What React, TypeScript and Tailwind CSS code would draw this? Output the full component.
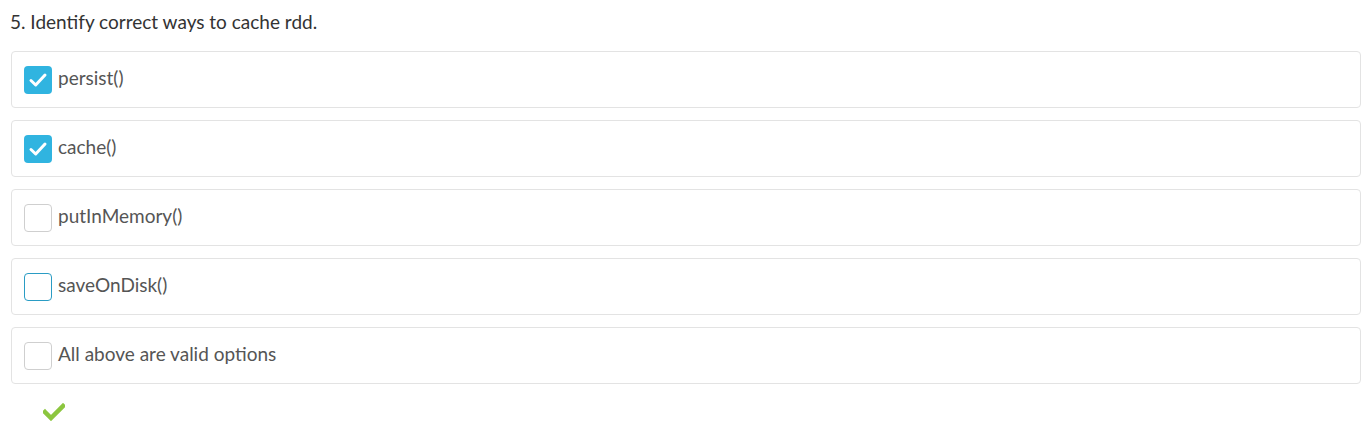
import React from "react";

const options = [
  { label: "persist()", state: "checked" },
  { label: "cache()", state: "checked" },
  { label: "putInMemory()", state: "empty" },
  { label: "saveOnDisk()", state: "focus" },
  { label: "All above are valid options", state: "empty" },
];

function Box({ state }: { state: string }) {
  if (state === "checked") {
    return (
      <div className="w-[28px] h-[28px] rounded-[4px] bg-[#30b4e0] flex items-center justify-center shrink-0">
        <svg width="22" height="22" viewBox="0 0 22 22" fill="none">
          <path d="M4 11.5 L8.7 16 L18 6" stroke="white" strokeWidth="3" strokeLinecap="round" strokeLinejoin="round" />
        </svg>
      </div>
    );
  }
  return (
    <div
      className={
        "w-[28px] h-[28px] rounded-[4px] bg-white shrink-0 border " +
        (state === "focus" ? "border-[#2a9cc4]" : "border-[#cfcfcf]")
      }
    />
  );
}

export default function App() {
  return (
    <div className="bg-white min-h-[432px] pl-[11px] pr-[11px] pt-[9px]" style={{ fontFamily: "Lato, 'Open Sans', sans-serif" }}>
      <div className="text-[19px] text-[#333] leading-[26px] -ml-[1px]">5. Identify correct ways to cache rdd.</div>
      <div className="mt-[16px] flex flex-col gap-[12px]">
        {options.map((o) => (
          <div key={o.label} className="h-[57px] border border-[#e3e3e3] rounded-[4px] flex items-center pl-[12px] gap-[6px]">
            <Box state={o.state} />
            <span className="text-[19px] text-[#555] -mt-[2px]">{o.label}</span>
          </div>
        ))}
      </div>
      <div className="pl-[32px] pt-[19px]">
        <svg width="22" height="18" viewBox="0 0 22 18">
          <path d="M2 9 L8 15 L20 3" stroke="#8cc63f" strokeWidth="4.5" fill="none" strokeLinecap="square" />
        </svg>
      </div>
    </div>
  );
}
